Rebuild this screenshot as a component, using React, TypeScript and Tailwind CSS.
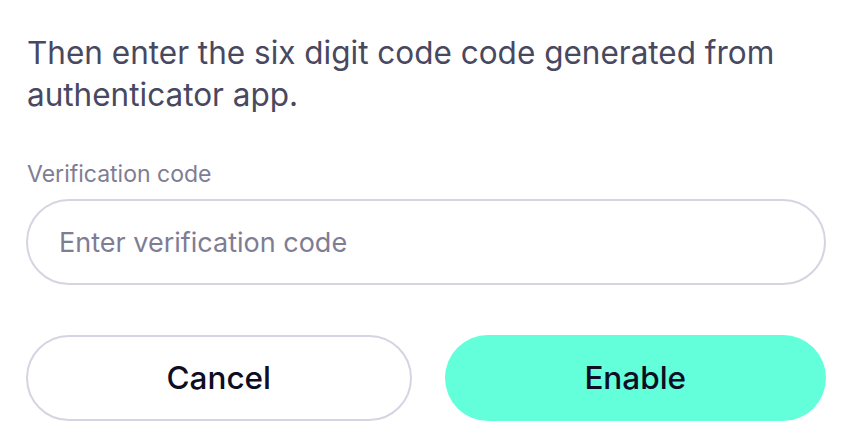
export default function App() {
  return (
    <div
      className="min-h-screen bg-white pl-[26px] pr-[18px] pt-[32px]"
      style={{ fontFamily: 'Inter, "Noto Sans", sans-serif' }}
    >
      {/* Instructions */}
      <p className="pl-px text-[31.5px] leading-[42px] text-[#484860]">
        Then enter the six digit code code generated from authenticator app.
      </p>

      {/* Code field */}
      <label className="mt-[44px] block pl-px text-[23px] leading-[28px] text-[#7f7d94]">
        Verification code
      </label>
      <input
        type="text"
        placeholder="Enter verification code"
        className="mt-[11px] block h-[86px] w-[800px] rounded-full border-2 border-[#d6d4e2] px-[31px] text-[27px] text-[#2a2a40] outline-none placeholder:text-[#7f7d94]"
      />

      {/* Actions */}
      <div className="mt-[50px] flex w-[800px] gap-[33px]">
        <button className="h-[86px] flex-1 rounded-full border-2 border-[#d6d4e2] bg-white text-[31.5px] font-medium text-[#0d0d24]">
          Cancel
        </button>
        <button className="h-[86px] flex-1 rounded-full bg-[#62ffda] text-[31.5px] font-medium text-[#0d0d24]">
          Enable
        </button>
      </div>
    </div>
  )
}
